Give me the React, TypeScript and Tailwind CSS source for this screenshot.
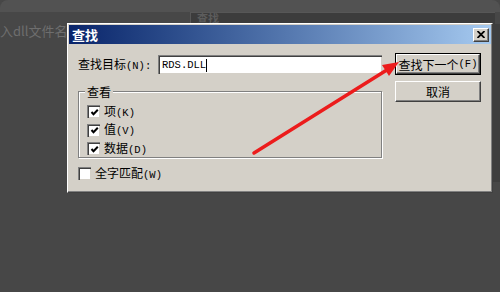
import React from 'react';

const CJK = "font-['Noto_Sans_CJK_SC','Noto_Sans',sans-serif]";

function M({ children }: { children: React.ReactNode }) {
  return <span className="font-['Liberation_Mono',monospace] text-[10.5px]">{children}</span>;
}

function CheckBox({ checked }: { checked?: boolean }) {
  return (
    <div className="w-[13px] h-[13px] shrink-0 bg-white border-t border-l border-[#808080] border-r-white border-b-white shadow-[inset_1px_1px_0_#404040,inset_-1px_-1px_0_#d4d0c8] flex items-center justify-center">
      {checked && (
        <svg width="9" height="9" viewBox="0 0 9 9">
          <path d="M1.5 4 L3.5 6.2 L7.8 1.8" stroke="#000" strokeWidth="2" fill="none" />
        </svg>
      )}
    </div>
  );
}

function Row({ checked, label, hot }: { checked?: boolean; label: string; hot: string }) {
  return (
    <div className="flex items-center gap-[4px] h-[13px]">
      <CheckBox checked={checked} />
      <span className="text-[12px] leading-[13px] text-black whitespace-nowrap">
        {label}<M>({hot})</M>
      </span>
    </div>
  );
}

export default function App() {
  return (
    <div className={`relative w-[500px] h-[292px] overflow-hidden bg-[#474747] ${CJK}`}>
      {/* app window behind the dialog */}
      <div className="h-[12px] bg-[#525252] rounded-t-[8px]" />
      <div className="absolute left-0 top-[23px] text-[13px] leading-[16px] text-[#6e6e6e] whitespace-nowrap">入dll文件名</div>
      <div className="absolute left-[190px] top-[12px] w-[305px] h-[12px] bg-[#3c3c3c] border-l border-t border-[#575757] pl-[6px] text-[11px] leading-[11px] font-bold text-[#5c5c5c]">查找</div>
      <div className="absolute left-[493px] top-[24px] w-[7px] h-[158px] bg-[#3e3e3e]" />

      {/* 查找 dialog */}
      <div className="absolute left-[67px] top-[23px] w-[426px] h-[170px] bg-[#d4d0c8] border border-t-white border-l-white border-r-[#404040] border-b-[#404040] shadow-[inset_-1px_-1px_0_#808080] p-[1px]">
        <div className="h-[19px] flex items-center justify-between bg-linear-to-r from-[#0a246a] to-[#a6caf0] pl-[3px] pr-[2px]">
          <span className="text-white font-bold text-[13px] leading-[15px]">查找</span>
          <div className="w-[16px] h-[14px] bg-[#d4d0c8] border border-t-white border-l-white border-r-[#404040] border-b-[#404040] shadow-[inset_-1px_-1px_0_#808080] flex items-center justify-center">
            <svg width="8" height="7" viewBox="0 0 8 7">
              <path d="M0.5 0 L7.5 7 M7.5 0 L0.5 7" stroke="#000" strokeWidth="1.8" />
            </svg>
          </div>
        </div>

        <div className="flex pl-[9px] pt-[9px]">
          <div className="w-[304px] pt-[2px]">
            <div className="flex items-center h-[19px]">
              <span className="w-[80px] text-[12px] leading-[13px] text-black whitespace-nowrap">查找目标<M>(N):</M></span>
              <div className="w-[224px] h-[19px] bg-white border-t border-l border-[#808080] border-r-white border-b-white shadow-[inset_1px_1px_0_#404040,inset_-1px_-1px_0_#d4d0c8] flex items-center pl-[3px]">
                <span className="font-['Liberation_Mono',monospace] text-[10.5px] leading-[13px] text-black">RDS.DLL</span>
                <span className="w-[1px] h-[13px] bg-black" />
              </div>
            </div>

            <div className="relative mt-[17px] h-[67px] border border-[#808080] shadow-[inset_1px_1px_0_#fff,1px_1px_0_#fff] pt-[13px] pl-[8px]">
              <span className="absolute -top-[8px] left-[6px] px-[2px] bg-[#d4d0c8] text-[12px] leading-[15px] text-black">查看</span>
              <div className="flex flex-col gap-[5.5px]">
                <Row checked label="项" hot="K" />
                <Row checked label="值" hot="V" />
                <Row checked label="数据" hot="D" />
              </div>
            </div>

            <div className="mt-[9px]">
              <Row label="全字匹配" hot="W" />
            </div>
          </div>

          <div className="ml-[13px] w-[86px] flex flex-col">
            <div className="h-[22px] border border-black">
              <div className="h-full border border-t-white border-l-white border-r-[#404040] border-b-[#404040] shadow-[inset_-1px_-1px_0_#808080] flex items-center justify-center text-[12px] leading-[13px] text-black whitespace-nowrap">
                查找下一个<M>(F)</M>
              </div>
            </div>
            <div className="mt-[6px] h-[21px] border border-t-white border-l-white border-r-[#404040] border-b-[#404040] shadow-[inset_-1px_-1px_0_#808080] flex items-center justify-center text-[12px] leading-[13px] text-black">
              取消
            </div>
          </div>
        </div>
      </div>

      {/* red annotation arrow */}
      <svg className="absolute left-0 top-0" width="500" height="292" viewBox="0 0 500 292">
        <line x1="254" y1="153" x2="390" y2="68" stroke="#ec1c1c" strokeWidth="3.5" strokeLinecap="round" />
        <polygon points="399,62 382,65 389,76" fill="#ec1c1c" />
      </svg>
    </div>
  );
}
